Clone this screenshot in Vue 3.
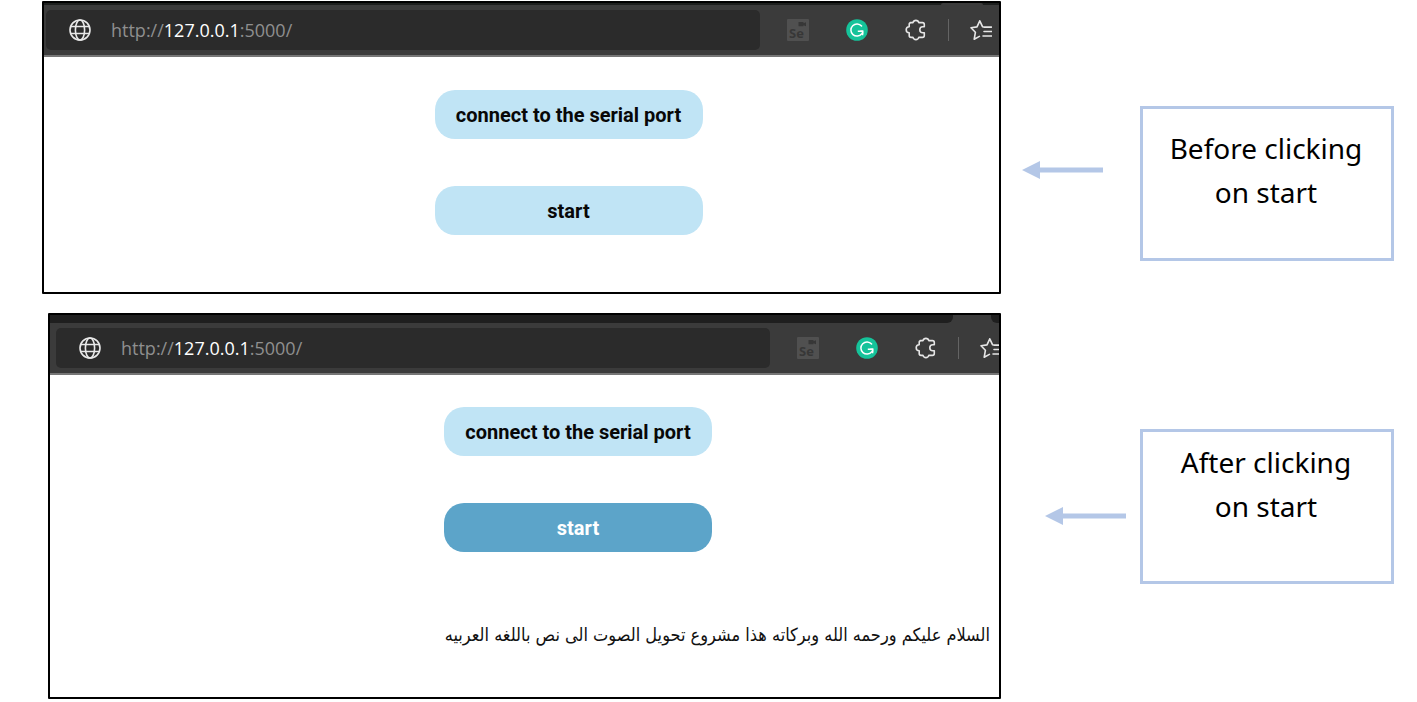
<script setup>
const scenes = [
  { id: 'before', note: ['Before clicking', 'on start'], active: false, transcript: '' },
  {
    id: 'after',
    note: ['After clicking', 'on start'],
    active: true,
    transcript: 'السلام عليكم ورحمه الله وبركاته هذا مشروع تحويل الصوت الى نص باللغه العربيه',
  },
]
</script>

<template>
  <main class="board">
    <section v-for="scene in scenes" :key="scene.id" class="scene" :class="scene.id">
      <div class="window">
        <div class="tabstrip"><span class="tab"></span></div>
        <header class="toolbar">
          <div class="address">
            <svg class="globe" viewBox="0 0 22 22" aria-hidden="true">
              <circle cx="11" cy="11" r="10" />
              <ellipse cx="11" cy="11" rx="4.6" ry="10" />
              <path d="M2 7.5h18M2 14.5h18" />
            </svg>
            <a class="url" href="http://127.0.0.1:5000/">http://<span class="host">127.0.0.1</span>:5000/</a>
          </div>
          <div class="tools">
            <button class="tool" type="button" aria-label="Selenium IDE">
              <svg viewBox="0 0 22 22">
                <rect width="22" height="22" rx="1" fill="#505050" />
                <path d="M11.500 3h5v1.200l2.500-1v4l-2.500-1v1h-5z" fill="#373737" />
                <text x="2" y="19" class="se">Se</text>
              </svg>
            </button>
            <button class="tool" type="button" aria-label="Grammarly">
              <svg viewBox="0 0 22 22">
                <circle cx="11" cy="11" r="10.800" fill="#15c39a" />
                <path d="M15.600 7A6.100 6.100 0 1 0 15.800 14.800" fill="none" stroke="#fff" stroke-width="1.500" stroke-linecap="round" />
                <path d="M11.800 12.200h4.800v4" fill="none" stroke="#fff" stroke-width="1.500" />
                <path d="M14 11.500h3.300v3.500z" fill="#fff" />
              </svg>
            </button>
            <button class="tool" type="button" aria-label="Extensions">
              <svg viewBox="0 0 22 22" class="line">
                <path d="M5.200 3.600H8a3 3 0 0 1 5.800 0h3.700q1.800 0 1.800 1.800v2.400h-1.500a3 3 0 0 0 0 6h1.500v2.800q0 1.800-1.800 1.800h-3.700a3 3 0 0 1-5.800 0H6q-1.800 0-1.800-1.800v-2.800a3 3 0 0 1 0-6V5.400q0-1.800 1.800-1.800z" />
              </svg>
            </button>
            <span class="divider"></span>
            <button class="tool" type="button" aria-label="Favorites">
              <svg viewBox="0 0 22 22" class="line">
                <path d="M14.500 8.100l-2-.4L9.800 1.800 7 7.900l-6 .9 4.400 4.500L4.200 20.200l5.200-2.800M14.500 8.100h7M14 12.500h7.500M13 17h8.500" />
              </svg>
            </button>
          </div>
        </header>
        <div class="page">
          <button class="action" type="button">connect to the serial port</button>
          <button class="action" :class="{ active: scene.active }" type="button">start</button>
          <p v-if="scene.transcript" class="transcript" dir="rtl" lang="ar">{{ scene.transcript }}</p>
        </div>
      </div>
      <svg class="arrow" viewBox="0 0 81 18" aria-hidden="true">
        <path d="M0 9L18 0v6.500h63v5H18V18z" fill="#b4c7e7" />
      </svg>
      <p class="note">
        <span v-for="line in scene.note" :key="line">{{ line }}</span>
      </p>
    </section>
  </main>
</template>

<style>
body {
  margin: 0;
  background: #fff;
}
</style>

<style scoped>
.board {
  display: flex;
  flex-direction: column;
  gap: 19px;
  padding: 1px 23px 3px 42px;
}
.scene {
  display: flex;
  align-items: flex-start;
}
.after {
  padding-left: 6px;
}
.window {
  flex: 1;
  min-width: 0;
  box-sizing: border-box;
  border: 2px solid #000;
  border-radius: 1px;
  background: #fff;
  overflow: hidden;
}
.before .window {
  min-height: 293px;
}
.after .window {
  min-height: 386px;
}
.tabstrip {
  display: flex;
  justify-content: flex-end;
  height: 2px;
  background: #1d1f1e;
}
.tab {
  width: 42px;
  margin-right: 16px;
  background: #3b3b3b;
  border-radius: 4px 4px 0 0;
}
.after .tabstrip {
  height: 8px;
  background: #3b3b3b;
  justify-content: space-between;
}
.after .tabstrip::before,
.after .tabstrip::after {
  content: '';
  background: #1f1f1f;
}
.after .tabstrip::before {
  flex: 1;
  border-bottom-right-radius: 6px;
}
.after .tabstrip::after {
  width: 8px;
  border-bottom-left-radius: 6px;
}
.after .tab {
  width: 38px;
  margin: 0;
}
.toolbar {
  display: flex;
  box-sizing: border-box;
  height: 52px;
  padding: 5px 0 5px 2px;
  background: #3b3b3b;
  border-bottom: 2px solid #767676;
}
.after .toolbar {
  padding-left: 6px;
}
.address {
  flex: 1;
  display: flex;
  align-items: center;
  gap: 20px;
  height: 40px;
  box-sizing: border-box;
  padding-left: 23px;
  border-radius: 5px;
  background: #2b2b2b;
}
.globe {
  width: 22px;
  height: 22px;
  fill: none;
  stroke: #e8e8e8;
  stroke-width: 1.6px;
}
.url {
  font: 18px/24px 'Open Sans', 'Noto Sans', sans-serif;
  color: #8f8f8f;
  text-decoration: none;
}
.host {
  color: #fff;
}
.tools {
  display: flex;
  align-items: center;
  box-sizing: border-box;
  width: 239px;
  height: 40px;
  padding-left: 27px;
  overflow: hidden;
}
.after .tools {
  width: 229px;
}
.tool {
  flex: none;
  width: 22px;
  height: 22px;
  margin: 0 37px 0 0;
  padding: 0;
  border: 0;
  background: none;
}
.tool:nth-child(3) {
  margin-right: 21px;
}
.tool:last-child {
  margin-right: 0;
}
.tool svg {
  display: block;
  width: 22px;
  height: 22px;
}
.line {
  fill: none;
  stroke: #e6e6e6;
  stroke-width: 1.6px;
  stroke-linejoin: round;
  stroke-linecap: round;
}
.se {
  font: bold 13px 'Open Sans', sans-serif;
  fill: #373737;
}
.divider {
  flex: none;
  width: 1px;
  height: 22px;
  margin-right: 21px;
  background: #646464;
}
.page {
  display: flex;
  flex-direction: column;
  align-items: center;
  gap: 47px;
  padding: 33px 0 0 94px;
}
.after .page {
  padding-top: 32px;
  padding-left: 107px;
}
.action {
  width: 268px;
  height: 49px;
  padding: 0;
  border: 0;
  border-radius: 20px;
  background: #c0e4f5;
  color: #080808;
  font: bold 20px/24px Roboto, 'Liberation Sans', sans-serif;
}
.action.active {
  background: #5ca4c9;
  color: #fff;
}
.transcript {
  align-self: flex-end;
  margin: 24px 9px 40px 0;
  font: 18px/24px 'DejaVu Sans Condensed', 'DejaVu Sans', sans-serif;
  color: #111;
  white-space: nowrap;
}
.arrow {
  flex: none;
  width: 81px;
  height: 18px;
  margin: 160px 37px 0 21px;
}
.after .arrow {
  margin: 194px 14px 0 44px;
}
.note {
  flex: none;
  display: flex;
  flex-direction: column;
  align-items: center;
  box-sizing: border-box;
  width: 254px;
  height: 155px;
  margin: 105px 0 0;
  padding: 17px 2px 0 0;
  border: 3px solid #b4c7e7;
  font: 28px/44px 'Noto Sans', 'Open Sans', sans-serif;
  color: #000;
}
.after .note {
  margin-top: 116px;
  padding-top: 8px;
}
</style>
